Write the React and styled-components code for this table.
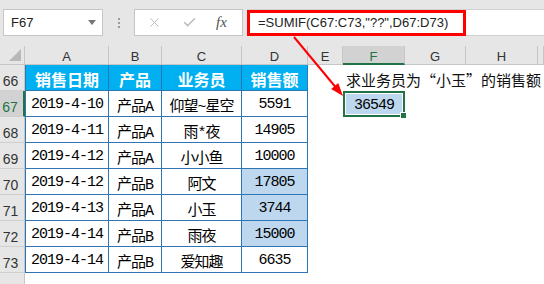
import React from "react";
import styled, { createGlobalStyle, css } from "styled-components";
import { X, Check } from "lucide-react";

const GlobalStyle = createGlobalStyle`
  html, body {
    margin: 0;
    padding: 0;
    background: #ffffff;
    overflow: hidden;
  }
`;

const Page = styled.div`
  position: relative;
  width: 544px;
  height: 284px;
  overflow: hidden;
  font-family: "Liberation Sans", Arial, sans-serif;
`;

const Toolbar = styled.div`
  height: 46px;
  box-sizing: border-box;
  padding: 9px 0 0 3px;
  background: #e6e6e6;
  display: flex;
  align-items: flex-start;
`;

const NameBox = styled.div`
  width: 100px;
  height: 27px;
  box-sizing: border-box;
  background: #ffffff;
  border: 1px solid #c6c6c6;
  display: flex;
  align-items: center;
  justify-content: space-between;
  padding: 0 6px 0 7px;
  font-size: 13px;
  color: #222;
`;

const DropArrow = styled.span`
  width: 0;
  height: 0;
  border-left: 4px solid transparent;
  border-right: 4px solid transparent;
  border-top: 5px solid #777;
`;

const Grip = styled.div`
  width: 31px;
  height: 27px;
  display: flex;
  flex-direction: column;
  align-items: center;
  justify-content: center;
  gap: 2px;

  span {
    width: 2px;
    height: 2px;
    background: #9a9a9a;
  }
`;

const FxBox = styled.div`
  width: 109px;
  height: 27px;
  box-sizing: border-box;
  background: #ffffff;
  border: 1px solid #c6c6c6;
  display: flex;
  align-items: center;
  justify-content: space-between;
  padding: 0 12px;
  color: #bcbcbc;
`;

const FxLabel = styled.span`
  font-family: "Liberation Serif", serif;
  font-style: italic;
  font-size: 15px;
  color: #555;
  width: 14px;
`;

const FormulaBar = styled.div`
  flex: 1;
  margin-left: 4px;
  height: 27px;
  box-sizing: border-box;
  background: #ffffff;
  border-top: 1px solid #d0d0d0;
  border-bottom: 1px solid #d0d0d0;
  display: flex;
  align-items: center;
`;

const RedBox = styled.div`
  width: 219px;
  height: 26px;
  box-sizing: border-box;
  border: 3px solid #ff0000;
  padding-left: 8px;
  display: flex;
  align-items: center;
  font-size: 13px;
  color: #222;
  white-space: nowrap;
`;

const Sheet = styled.div`
  display: grid;
  grid-template-columns: 25px 84px 53px 80px 66px 35px 62px 61px 72px 1fr;
  grid-template-rows: 19px repeat(9, 26px);
`;

const Corner = styled.div`
  background: #e6e6e6;
  border-right: 1px solid #c6c6c6;
  border-bottom: 1px solid #c6c6c6;
  box-sizing: border-box;
  display: flex;
  align-items: flex-end;
  justify-content: flex-end;
  padding: 0 3px 3px 0;

  span {
    width: 0;
    height: 0;
    border-left: 12px solid transparent;
    border-bottom: 12px solid #b8b8b8;
  }
`;

const ColHead = styled.div`
  background: ${(p) => (p.$active ? "#d2d2d2" : "#e6e6e6")};
  border-right: 1px solid #c6c6c6;
  border-bottom: ${(p) => (p.$active ? "2px solid #217346" : "1px solid #c6c6c6")};
  box-sizing: border-box;
  display: flex;
  align-items: center;
  justify-content: center;
  padding-top: 3px;
  font-size: 13px;
  color: ${(p) => (p.$active ? "#217346" : "#333")};
`;

const RowHead = styled.div`
  background: ${(p) => (p.$active ? "#d2d2d2" : "#e6e6e6")};
  border-right: ${(p) => (p.$active ? "2px solid #217346" : "1px solid #c6c6c6")};
  border-bottom: 1px solid #cfcfcf;
  box-sizing: border-box;
  display: flex;
  align-items: flex-end;
  justify-content: center;
  padding: 0 3px 2px 0;
  font-size: 14px;
  line-height: 1;
  color: ${(p) => (p.$active ? "#217346" : "#333")};
`;

const TableCell = styled.div`
  box-sizing: border-box;
  display: flex;
  align-items: center;
  justify-content: center;
  padding-top: 2px;
  white-space: nowrap;
  background: ${(p) => (p.$fill ? "#bdd7ee" : "#ffffff")};
  border-right: 1px solid #2e75b6;
  border-bottom: 1px solid #2e75b6;
  font-family: "Liberation Mono", "DejaVu Sans Mono", "Noto Sans CJK SC", monospace;
  font-size: 15px;
  letter-spacing: -1px;
  color: #000;
  ${(p) => p.$first && "border-left: 1px solid #2e75b6;"}
  ${(p) =>
    p.$head &&
    css`
      background: #00b0f0;
      color: #ffffff;
      font-family: "Noto Sans CJK SC", sans-serif;
      font-weight: 700;
      font-size: 16px;
      letter-spacing: 0;
    `}
`;

const Blank = styled.div`
  background: transparent;
`;

const Note = styled.div`
  display: flex;
  align-items: flex-end;
  padding: 0 0 2px 3px;
  white-space: nowrap;
  font-family: "Noto Sans CJK SC", sans-serif;
  font-size: 15px;
  line-height: 1.2;
  color: #111;
`;

const ActiveCell = styled.div`
  position: relative;
  box-sizing: border-box;
  background: #bdd7ee;
  border: 2px solid #217346;
  box-shadow: inset 0 0 0 1px #ffffff;
  display: flex;
  align-items: center;
  justify-content: center;
  padding-top: 2px;
  font-family: "Liberation Mono", "DejaVu Sans Mono", monospace;
  font-size: 15px;
  letter-spacing: -1px;
  color: #000;

  &::after {
    content: "";
    position: absolute;
    right: -4px;
    bottom: -4px;
    width: 5px;
    height: 5px;
    background: #217346;
    border: 1px solid #ffffff;
  }
`;

const Overlay = styled.svg`
  position: absolute;
  left: 0;
  top: 0;
  pointer-events: none;
`;

const columns = ["A", "B", "C", "D", "E", "F", "G", "H", ""];

const data = [
  ["2019-4-10", "产品A", "仰望~星空", "5591"],
  ["2019-4-11", "产品A", "雨*夜", "14905"],
  ["2019-4-12", "产品A", "小小鱼", "10000"],
  ["2019-4-12", "产品B", "阿文", "17805"],
  ["2019-4-13", "产品A", "小玉", "3744"],
  ["2019-4-14", "产品B", "雨夜", "15000"],
  ["2019-4-14", "产品B", "爱知趣", "6635"],
];

const highlighted = [3, 4, 5];

const App = () => (
  <Page>
    <GlobalStyle />
    <Toolbar>
      <NameBox>
        F67
        <DropArrow />
      </NameBox>
      <Grip>
        <span />
        <span />
        <span />
      </Grip>
      <FxBox>
        <X size={15} strokeWidth={1.6} />
        <Check size={15} strokeWidth={2.4} />
        <FxLabel>fx</FxLabel>
      </FxBox>
      <FormulaBar>
        <RedBox>=SUMIF(C67:C73,"??",D67:D73)</RedBox>
      </FormulaBar>
    </Toolbar>

    <Sheet>
      <Corner>
        <span />
      </Corner>
      {columns.map((c, i) => (
        <ColHead key={i} $active={c === "F"}>
          {c}
        </ColHead>
      ))}

      <RowHead>66</RowHead>
      {["销售日期", "产品", "业务员", "销售额"].map((h, i) => (
        <TableCell key={h} $head $first={i === 0}>
          {h}
        </TableCell>
      ))}
      <Blank />
      <Note>求业务员为“小玉”的销售额</Note>
      <Blank />
      <Blank />
      <Blank />

      {data.map((row, r) => (
        <React.Fragment key={r}>
          <RowHead $active={r === 0}>{67 + r}</RowHead>
          {row.map((v, c) => (
            <TableCell
              key={c}
              $first={c === 0}
              $fill={c === 3 && highlighted.includes(r)}
            >
              {v}
            </TableCell>
          ))}
          <Blank />
          {r === 0 ? <ActiveCell>36549</ActiveCell> : <Blank />}
          <Blank />
          <Blank />
          <Blank />
        </React.Fragment>
      ))}

      <RowHead />
    </Sheet>

    <Overlay width="544" height="284" viewBox="0 0 544 284">
      <line x1="294" y1="37" x2="335.5" y2="87" stroke="#ff0000" strokeWidth="2" />
      <polygon points="343,96 331.2,88.9 338.2,83.1" fill="#ff0000" />
    </Overlay>
  </Page>
);

export default App;
